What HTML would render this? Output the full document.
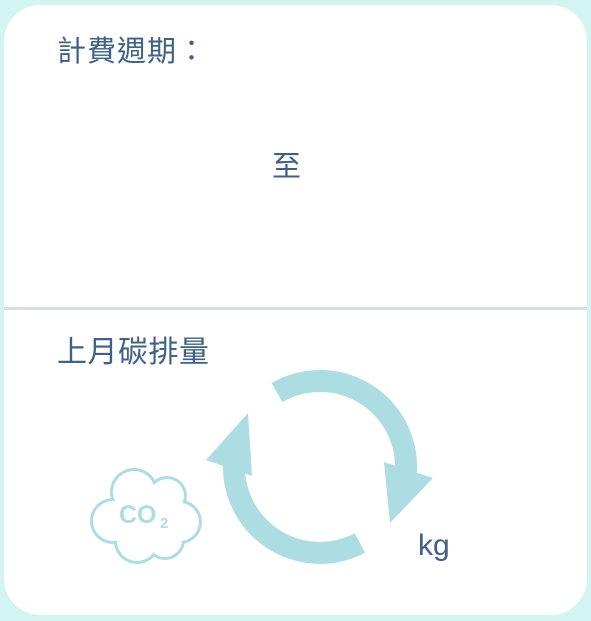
<!DOCTYPE html>
<html><head><meta charset="utf-8"><style>
html,body{margin:0;padding:0;width:591px;height:621px;background:#d3f5f1;overflow:hidden}
.card{position:absolute;left:4px;top:5px;width:583px;height:610px;background:#fff;border-radius:36px}
.t{position:absolute;font-family:"Liberation Sans","Noto Sans CJK TC",sans-serif;color:#3e6089;font-size:29px;line-height:1;white-space:nowrap}
.div{position:absolute;left:4px;top:307px;width:583px;height:3px;background:#d6dfe6}
svg{position:absolute;left:0;top:0}
</style></head><body>
<div class="card"></div>
<div class="t" style="left:57px;top:38px;letter-spacing:1px">計費週期：</div>
<div class="t" style="left:272px;top:153px">至</div>
<div class="div"></div>
<div class="t" style="left:57px;top:338px;font-size:30px;letter-spacing:0.5px">上月碳排量</div>
<div class="t" style="left:418px;top:531px;font-size:30px">kg</div>
<svg width="591" height="621">
<g fill="none" stroke="#acdde2" stroke-width="22">
<path d="M277 392.5 A86 86 0 0 1 405.7 474.5"/>
<path d="M360 543 A86 86 0 0 1 234.3 459.5"/>
</g>
<g fill="#acdde2">
<polygon points="384,462 433,478 390,523"/>
<polygon points="206,460 248,413 252,476"/>
<circle cx="134" cy="492" r="24"/><circle cx="167" cy="496" r="20"/>
<circle cx="113" cy="521" r="23"/><circle cx="180" cy="522" r="22"/>
<circle cx="137" cy="541" r="23"/><circle cx="165" cy="540" r="20"/>
<circle cx="145" cy="518" r="25"/>
</g>
<g fill="#fff">
<circle cx="134" cy="492" r="21"/><circle cx="167" cy="496" r="17"/>
<circle cx="113" cy="521" r="20"/><circle cx="180" cy="522" r="19"/>
<circle cx="137" cy="541" r="20"/><circle cx="165" cy="540" r="17"/>
<circle cx="145" cy="518" r="25"/>
</g>
<text x="119" y="523" font-family="Liberation Sans,sans-serif" font-weight="bold" font-size="25" fill="#acdde2">CO</text>
<text x="160" y="528" font-family="Liberation Sans,sans-serif" font-weight="bold" font-size="15" fill="#acdde2">2</text>
</svg>
</body></html>
